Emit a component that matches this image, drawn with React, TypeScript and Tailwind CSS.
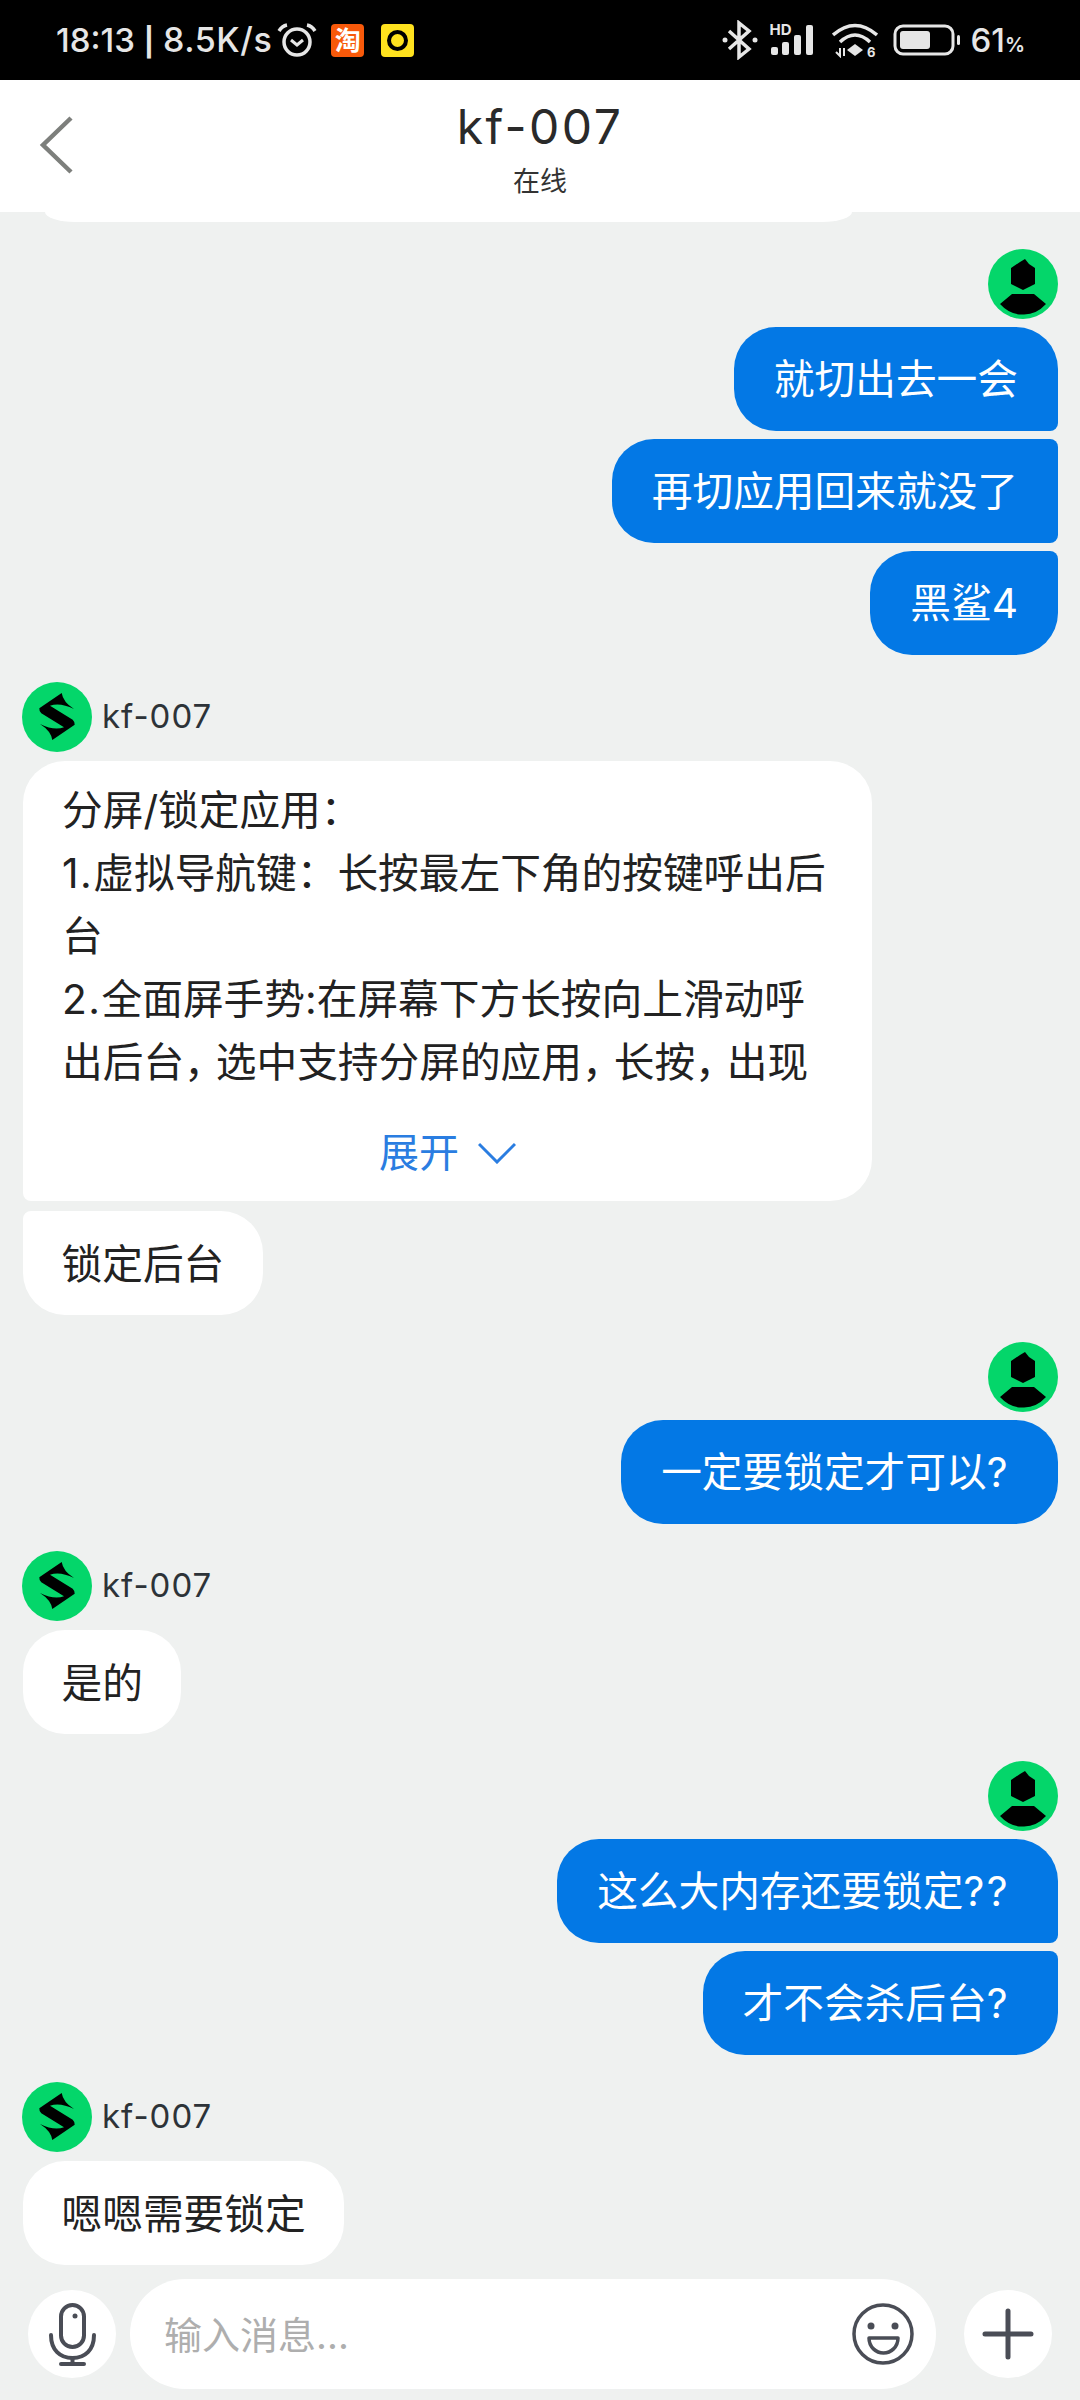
import type { ReactNode } from "react";

const bubbleText = "text-[40.7px] leading-[64px] whitespace-nowrap";

function UserAvatar() {
	return (
		<svg width="70" height="70" viewBox="0 0 70 70" className="block">
			<circle cx="35" cy="35" r="35" fill="#04d66a" />
			<path d="M32 13 L37 10 L41 15 L47 19 V35 L35 41 L23 35 V19 Z" fill="#000" />
			<path d="M24 45 H46 L58 55 Q48 66 35 65.5 Q22 66 12 55 Z" fill="#000" />
		</svg>
	);
}

function SharkAvatar() {
	return (
		<svg width="70" height="70" viewBox="0 0 70 70" className="block">
			<circle cx="35" cy="35" r="35" fill="#04d66a" />
			<path
				d="M17.3 26.3 L39.7 11 Q41 20 52 27 Q38 20 28 23.7 L50.7 37.7 Q53 40 52.7 42.7 L30.3 58 Q29 49 18 42 Q32 49 42 45.3 L19.3 31.3 Q17 29 17.3 26.3 Z"
				fill="#000"
			/>
		</svg>
	);
}

// the question mark sits wider in the original font
function withMarks(text: string) {
	return text.split(/(\?+)/).map((part, i) =>
		part.startsWith("?") ? (
			<span key={i}>
				<span className="tracking-[2.5px]">{part.slice(1)}</span>
				<span className="tracking-[10.5px]">?</span>
			</span>
		) : (
			part
		),
	);
}

function Sent({ lines }: { lines: string[] }) {
	return (
		<div className="flex flex-col items-end mt-[27px]">
			<UserAvatar />
			<div className="flex flex-col items-end gap-[8px] mt-[8px]">
				{lines.map((t, i) => {
					const first = i === 0;
					const last = i === lines.length - 1;
					return (
						<div
							key={t}
							className={`bg-[#0378e5] text-white px-[40px] pt-[21px] pb-[19px] rounded-[42px] ${first ? "" : "rounded-tr-[8px]"} ${last ? "" : "rounded-br-[8px]"} ${bubbleText}`}
						>
							{withMarks(t)}
						</div>
					);
				})}
			</div>
		</div>
	);
}

function Received({ children }: { children: ReactNode }) {
	return (
		<div className="flex flex-col items-start mt-[27px]">
			<div className="flex items-center gap-[10px] -ml-[1px]">
				<SharkAvatar />
				<span className="text-[33px] tracking-[1px] text-[#2d3338]">kf-007</span>
			</div>
			<div className="flex flex-col items-start gap-[10px] mt-[9px]">{children}</div>
		</div>
	);
}

function Comma() {
	return <span className="tracking-[-9px]">，</span>;
}

function Expandable() {
	const lineClass = "text-[40.7px] leading-[63px] whitespace-nowrap";
	return (
		<div className="w-[849px] bg-white rounded-[42px] rounded-bl-[8px] pt-[18px] px-[39px] pb-[16px] text-[#222]">
			<div className={lineClass}>分屏/锁定应用：</div>
			<div className={lineClass}>
				<span className="tracking-[1.5px]">1.</span>虚拟导航键：长按最左下角的按键呼出后
			</div>
			<div className={lineClass}>台</div>
			<div className={lineClass}>
				<span className="tracking-[1.5px]">2.</span>全面屏手势:在屏幕下方长按向上滑动呼
			</div>
			<div className={lineClass}>
				出后台
				<Comma />
				选中支持分屏的应用
				<Comma />
				长按
				<Comma />
				出现
			</div>
			<div className="flex items-center justify-center gap-[19px] mt-[27px] text-[#2a7de1] text-[40px] leading-[64px]">
				<span>展开</span>
				<svg width="38" height="22" viewBox="0 0 38 22" fill="none" stroke="#2a7de1" strokeWidth="3">
					<path d="M1 2 L19 20 L37 2" />
				</svg>
			</div>
		</div>
	);
}

function Plain({ text, tail }: { text: string; tail?: boolean }) {
	return (
		<div className={`bg-white text-[#222] px-[38.5px] pt-[22px] pb-[18px] rounded-[42px] ${tail ? "rounded-tl-[8px]" : ""} ${bubbleText}`}>
			{text}
		</div>
	);
}

function StatusBar() {
	return (
		<div className="h-[80px] bg-black flex items-center justify-between pl-[56px] pr-[55px] text-[#e6e6e6] shrink-0">
			<div className="flex items-center">
				<span className="text-[33px] leading-none whitespace-nowrap font-medium">
					18:13 <span className="text-[28px] font-bold">|</span>{" "}
					<span className="text-[34px] tracking-[0.6px]">8.5K/s</span>
				</span>
				<svg width="40" height="34" viewBox="0 0 40 34" fill="none" stroke="#e6e6e6" className="ml-[5px]">
					<circle cx="20" cy="19" r="13" strokeWidth="3.5" />
					<path d="M14 17 L20 22 L26 17" strokeWidth="3" />
					<path d="M2 8 Q5 3 10 2 M38 8 Q35 3 30 2" strokeWidth="3.5" />
				</svg>
				<div className="ml-[14px] w-[33px] h-[33px] rounded-[4px] bg-[#f8590a] text-white text-[26px] leading-[33px] font-bold text-center">
					淘
				</div>
				<div className="ml-[17px] w-[33px] h-[33px] rounded-[4px] bg-[#ffe21e] flex items-center justify-center">
					<div className="w-[21px] h-[21px] rounded-full border-[4px] border-black" />
				</div>
			</div>
			<div className="flex items-center">
				<svg width="36" height="40" viewBox="0 0 36 40" fill="none" stroke="#e6e6e6" strokeWidth="3.5">
					<path d="M7 11 L27 29 L17 37 V3 L27 11 L7 29" />
					<circle cx="3" cy="20" r="2.5" fill="#e6e6e6" stroke="none" />
					<circle cx="33" cy="20" r="2.5" fill="#e6e6e6" stroke="none" />
				</svg>
				<div className="relative w-[50px] h-[34px] ml-[11px]">
					<span className="absolute left-0 top-[-1px] text-[15px] leading-[15px] font-bold">HD</span>
					<svg width="50" height="34" viewBox="0 0 50 34" fill="#e6e6e6" className="absolute inset-0">
						<rect x="2" y="24" width="7" height="8" rx="2" />
						<rect x="13" y="19" width="7" height="13" rx="2" />
						<rect x="25" y="12" width="7" height="20" rx="2" />
						<rect x="37" y="2" width="7" height="30" rx="2" />
					</svg>
				</div>
				<svg width="46" height="36" viewBox="0 0 46 36" fill="none" stroke="#e6e6e6" strokeWidth="3.5" className="ml-[13px]">
					<path d="M1 13 Q23 -6 45 13" />
					<path d="M8 20 Q23 6 38 20" />
					<path d="M23 22 L31 28 L23 34 L15 28 Z" fill="#e6e6e6" stroke="none" />
					<path d="M4 30 L8 34 V26 M12 26 V34" strokeWidth="2" />
					<text x="35" y="35" fontSize="13" fontWeight="700" fill="#e6e6e6" stroke="none">6</text>
				</svg>
				<svg width="68" height="32" viewBox="0 0 68 32" fill="none" className="ml-[15px]">
					<rect x="2" y="2" width="58" height="28" rx="8" stroke="#e6e6e6" strokeWidth="3" />
					<rect x="7" y="7" width="30" height="18" rx="3" fill="#e6e6e6" />
					<rect x="64" y="11" width="3" height="10" rx="1.5" fill="#e6e6e6" />
				</svg>
				<span className="ml-[9px] text-[33px] leading-none font-medium">
					61<span className="text-[20px] font-semibold">%</span>
				</span>
			</div>
		</div>
	);
}

function Header() {
	return (
		<div className="h-[132px] bg-white shrink-0 relative flex flex-col items-center">
			<svg width="36" height="60" viewBox="0 0 36 60" fill="none" stroke="#7d7f7c" strokeWidth="4.5" className="absolute left-[39px] top-[36px]">
				<path d="M32 2 L4 29 L32 56" />
			</svg>
			<div className="text-[48px] tracking-[2.5px] leading-[58px] mt-[18px] text-[#2a2a2a]">kf-007</div>
			<div className="text-[27px] leading-[34px] mt-[9px] text-[#333]">在线</div>
		</div>
	);
}

function InputBar() {
	return (
		<div className="shrink-0 flex items-center pl-[28px] pr-[28px] pb-[11px] pt-[14px]">
			<div className="w-[88px] h-[88px] rounded-full bg-white shrink-0">
				<svg width="88" height="88" viewBox="0 0 88 88" fill="none" stroke="#4a4d56" strokeWidth="4" strokeLinecap="round">
					<rect x="33" y="15" width="23" height="42" rx="11.5" />
					<circle cx="47" cy="26" r="2.5" fill="#4a4d56" stroke="none" />
					<path d="M23 45 C23 60 32 68 44.5 68 C57 68 66 60 66 45" />
					<path d="M44.5 68 V74 M33 74 H56" />
				</svg>
			</div>
			<div className="ml-[14px] w-[806px] h-[110px] rounded-[55px] bg-white flex items-center justify-between pl-[34px] pr-[22px]">
				<span className="text-[38px] text-[#aeaeae] mt-[2px]">输入消息...</span>
				<svg width="62" height="62" viewBox="0 0 62 62" fill="none" stroke="#4a4d56" strokeWidth="3.5">
					<circle cx="31" cy="31" r="29" />
					<circle cx="19" cy="23" r="3.5" fill="#4a4d56" stroke="none" />
					<circle cx="43" cy="23" r="3.5" fill="#4a4d56" stroke="none" />
					<path d="M17 35 H46 C46 44 39 50 31.5 50 C24 50 17 44 17 35 Z" strokeLinejoin="round" />
				</svg>
			</div>
			<div className="ml-[28px] w-[88px] h-[88px] rounded-full bg-white flex items-center justify-center shrink-0">
				<svg width="52" height="52" viewBox="0 0 52 52" stroke="#4a4d56" strokeWidth="5" strokeLinecap="round">
					<path d="M26 3 V49 M3 26 H49" />
				</svg>
			</div>
		</div>
	);
}

export default function App() {
	return (
		<div className="w-[1080px] h-[2400px] bg-[#eff1f0] flex flex-col overflow-hidden font-[Inter,'Noto_Sans_CJK_SC',sans-serif]">
			<StatusBar />
			<Header />
			<div className="flex-1 min-h-0 overflow-hidden pl-[23px] pr-[22px]">
				<div className="h-[10px] ml-[22px] w-[807px] bg-white rounded-b-[30px_10px]" />
				<Sent lines={["就切出去一会", "再切应用回来就没了", "黑鲨4"]} />
				<Received>
					<Expandable />
					<Plain text="锁定后台" tail />
				</Received>
				<Sent lines={["一定要锁定才可以?"]} />
				<Received>
					<Plain text="是的" />
				</Received>
				<Sent lines={["这么大内存还要锁定??", "才不会杀后台?"]} />
				<Received>
					<Plain text="嗯嗯需要锁定" />
				</Received>
			</div>
			<InputBar />
		</div>
	);
}
